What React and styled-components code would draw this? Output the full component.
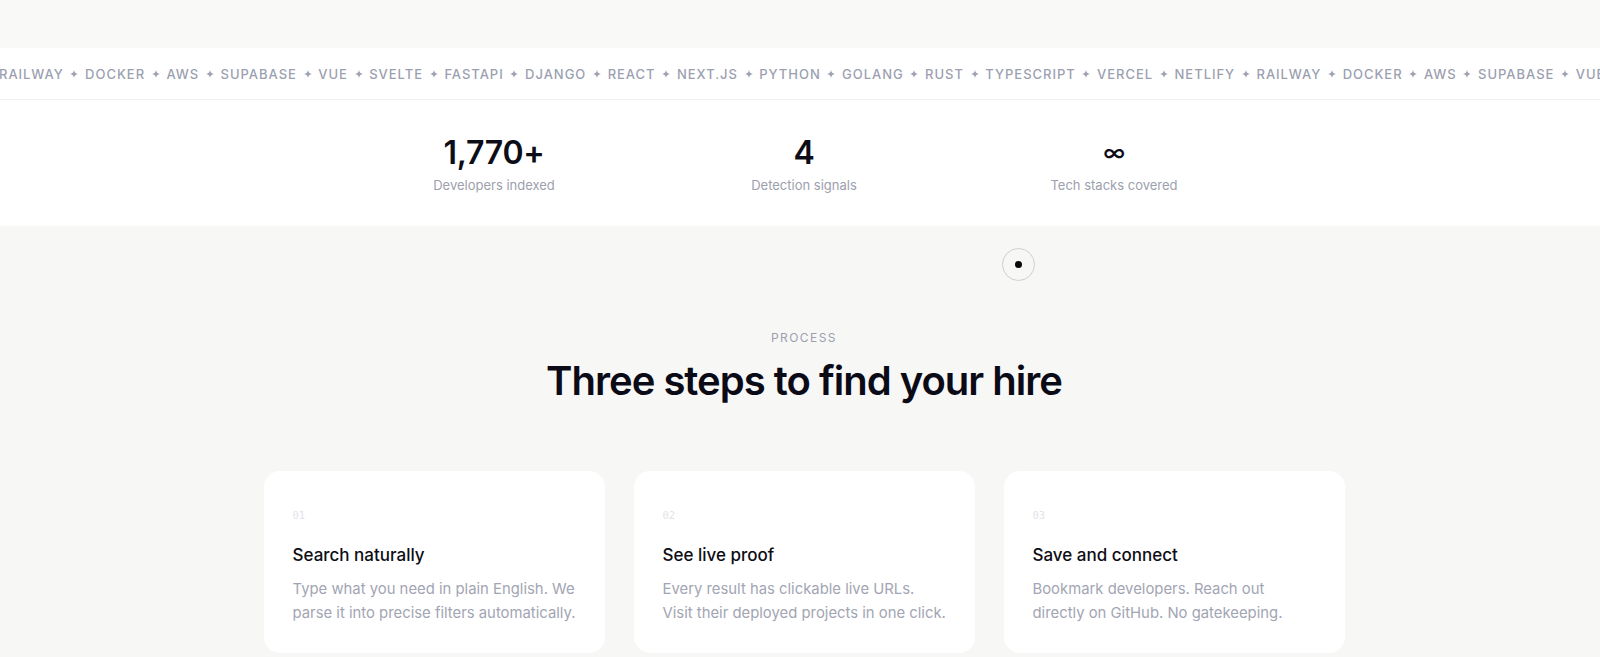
import React from 'react';
import styled, { createGlobalStyle } from 'styled-components';

const GlobalStyle = createGlobalStyle`
  html, body {
    margin: 0;
    padding: 0;
    background: #f7f7f6;
    font-family: Inter, "Noto Sans", sans-serif;
    -webkit-font-smoothing: antialiased;
  }
`;

const STACKS = [
  'RAILWAY', 'DOCKER', 'AWS', 'SUPABASE', 'VUE', 'SVELTE', 'FASTAPI', 'DJANGO',
  'REACT', 'NEXT.JS', 'PYTHON', 'GOLANG', 'RUST', 'TYPESCRIPT', 'VERCEL', 'NETLIFY',
];

const STATS = [
  { value: '1,770+', label: 'Developers indexed' },
  { value: '4', label: 'Detection signals' },
  { value: '∞', label: 'Tech stacks covered', glyph: true },
];

// descriptions are kept as their two set lines
const STEPS = [
  {
    n: '01',
    title: 'Search naturally',
    lines: ['Type what you need in plain English. We', 'parse it into precise filters automatically.'],
  },
  {
    n: '02',
    title: 'See live proof',
    lines: ['Every result has clickable live URLs.', 'Visit their deployed projects in one click.'],
  },
  {
    n: '03',
    title: 'Save and connect',
    lines: ['Bookmark developers. Reach out', 'directly on GitHub. No gatekeeping.'],
  },
];

const Page = styled.div`
  position: relative;
  min-height: 657px;
  overflow: hidden;
`;

const TopFade = styled.div`
  height: 48px;
  background: #f9f9f8;
`;

const Marquee = styled.div`
  background: #fff;
  border-bottom: 1px solid #f1f1f1;
  height: 51px;
  display: flex;
  align-items: center;
  overflow: hidden;
`;

const Track = styled.div`
  display: flex;
  align-items: center;
  gap: 6.7px;
  white-space: nowrap;
  margin-left: -1px;
`;

const Stack = styled.span`
  font-size: 13px;
  font-weight: 500;
  letter-spacing: 0.075em;
  color: #9b9fb0;
`;

const StarIcon = styled.svg`
  width: 8px;
  height: 8px;
  flex: none;
  fill: #9ea2b3;
`;

const Star = () => (
  <StarIcon viewBox="0 0 10 10">
    <path d="M5 0C5.4 3 7 4.6 10 5 7 5.4 5.4 7 5 10 4.6 7 3 5.4 0 5 3 4.6 4.6 3 5 0Z" />
  </StarIcon>
);

const StatsBand = styled.section`
  background: #fff;
  padding: 33px 0 31px 8px;
  display: flex;
  justify-content: center;
`;

const StatsGrid = styled.div`
  display: grid;
  grid-template-columns: repeat(3, 310px);
`;

const Stat = styled.div`
  display: flex;
  flex-direction: column;
  align-items: center;
  gap: 2px;
`;

const StatValue = styled.div`
  font-size: ${(p) => (p.$glyph ? '23px' : '32px')};
  line-height: 40px;
  font-weight: ${(p) => (p.$glyph ? 500 : 600)};
  color: #0d0d18;
  letter-spacing: -0.01em;
`;

const StatLabel = styled.div`
  font-size: 13px;
  line-height: 20px;
  color: #9ca0ae;
`;

const Process = styled.section`
  padding: 104px 0 0 8px;
  display: flex;
  flex-direction: column;
  align-items: center;
`;

const Eyebrow = styled.div`
  font-size: 12px;
  line-height: 16px;
  letter-spacing: 0.12em;
  color: #9ca0ae;
  margin-bottom: 11px;
`;

const Heading = styled.h2`
  margin: 0 0 66px;
  font-size: 40px;
  line-height: 48px;
  font-weight: 600;
  letter-spacing: -0.025em;
  color: #0b0b17;
`;

const Cards = styled.div`
  display: grid;
  grid-template-columns: repeat(3, 341px);
  gap: 29px;
`;

const Card = styled.div`
  background: #fff;
  border-radius: 16px;
  padding: 36px 20px 28px 29px;
  display: flex;
  flex-direction: column;
`;

const StepNo = styled.div`
  font-family: "DejaVu Sans Mono", "Liberation Mono", monospace;
  font-size: 10.5px;
  line-height: 16px;
  color: #e2e3e8;
  margin-bottom: 20px;
`;

const StepTitle = styled.h3`
  margin: 0 0 10px;
  font-size: 17px;
  line-height: 24px;
  font-weight: 500;
  color: #0d0d14;
`;

const StepText = styled.p`
  margin: 0;
  font-size: 14.85px;
  line-height: 24px;
  color: #a2a5b3;
  white-space: nowrap;
`;

const Line = styled.span`
  display: block;
`;

const Cursor = styled.div`
  position: absolute;
  left: 1002px;
  top: 248px;
  width: 33px;
  height: 33px;
  border: 1.5px solid #cfcfcf;
  border-radius: 50%;
  box-sizing: border-box;
  display: flex;
  align-items: center;
  justify-content: center;

  &::after {
    content: '';
    width: 7px;
    height: 7px;
    border-radius: 50%;
    background: #0a0a0a;
  }
`;

export default function App() {
  const items = [...STACKS, ...STACKS];
  return (
    <Page>
      <GlobalStyle />
      <TopFade />
      <Marquee>
        <Track>
          {items.map((s, i) => (
            <React.Fragment key={i}>
              <Stack>{s}</Stack>
              <Star />
            </React.Fragment>
          ))}
        </Track>
      </Marquee>
      <StatsBand>
        <StatsGrid>
          {STATS.map((s) => (
            <Stat key={s.label}>
              <StatValue $glyph={s.glyph}>{s.value}</StatValue>
              <StatLabel>{s.label}</StatLabel>
            </Stat>
          ))}
        </StatsGrid>
      </StatsBand>
      <Process>
        <Eyebrow>PROCESS</Eyebrow>
        <Heading>Three steps to find your hire</Heading>
        <Cards>
          {STEPS.map((s) => (
            <Card key={s.n}>
              <StepNo>{s.n}</StepNo>
              <StepTitle>{s.title}</StepTitle>
              <StepText>
                {s.lines.map((l) => (
                  <Line key={l}>{l}</Line>
                ))}
              </StepText>
            </Card>
          ))}
        </Cards>
      </Process>
      <Cursor />
    </Page>
  );
}
